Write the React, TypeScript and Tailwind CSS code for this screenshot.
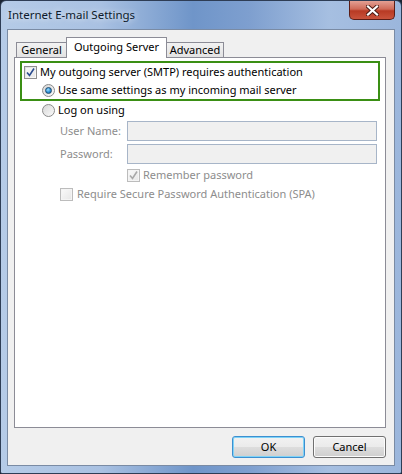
import React from "react";

function CheckBox({ checked, disabled }: { checked?: boolean; disabled?: boolean }) {
  return (
    <span
      className={
        disabled
          ? "w-[13px] h-[13px] shrink-0 border border-[#bcbcbc] bg-[#f4f4f4] flex items-center justify-center"
          : "w-[13px] h-[13px] shrink-0 border border-[#8f8f8f] bg-gradient-to-br from-[#dcdcdc] to-[#fbfbfb] flex items-center justify-center"
      }
    >
      <span className="w-[9px] h-[9px] bg-gradient-to-br from-[#f8f8f8] to-[#e8e8e8] flex items-center justify-center">
        {checked && (
          <svg width="9" height="9" viewBox="0 0 9 9">
            <path
              d="M1 4.5 L3.5 7.5 L8 0.5"
              fill="none"
              stroke={disabled ? "#a8a8a8" : "#2b4c8f"}
              strokeWidth="1.6"
            />
          </svg>
        )}
      </span>
    </span>
  );
}

function Radio({ checked }: { checked?: boolean }) {
  return (
    <span className="w-[13px] h-[13px] shrink-0 rounded-full border border-[#8a8a8a] bg-gradient-to-br from-[#d6d6d6] to-[#fbfbfb] flex items-center justify-center">
      {checked && (
        <span className="w-[7px] h-[7px] rounded-full border border-[#1c4a6e] bg-[radial-gradient(circle_at_40%_35%,#9fe1ff,#2a8ed6_55%,#1b5f93)]" />
      )}
    </span>
  );
}

export default function App() {
  const font = "font-['Noto_Sans','Liberation_Sans',sans-serif] text-[11px] leading-[16px]";

  return (
    <div className={`w-[402px] h-[474px] ${font} text-black bg-[#1a2433]`}>
      <div className="w-full h-full rounded-t-[6px] rounded-b-[2px] border border-[#2e3d55] bg-[linear-gradient(90deg,#b5cbe7_0%,#a9c1e2_25%,#6f95c9_48%,#7e9fcf_62%,#a6bfe1_82%,#9bb6dc_100%)] flex flex-col">
        <div className="h-[28px] flex justify-between shrink-0">
          <div className="pl-[7px] pt-[6px] text-[11.5px] text-[#0d1a2b] [text-shadow:0_0_6px_rgba(255,255,255,0.9)]">
            Internet E-mail Settings
          </div>
          <div className="mr-[6px] w-[46px] h-[19px] rounded-b-[5px] border border-t-0 border-[#5b1d16] bg-[linear-gradient(180deg,#e3a094_0%,#cf6a58_45%,#b83a24_55%,#c9533c_100%)] flex items-center justify-center">
            <svg width="13" height="11" viewBox="0 0 13 11">
              <path
                d="M2 1.5 L11 9.5 M11 1.5 L2 9.5"
                stroke="#4a1a14"
                strokeWidth="4"
                strokeLinecap="square"
              />
              <path
                d="M2 1.5 L11 9.5 M11 1.5 L2 9.5"
                stroke="#ffffff"
                strokeWidth="2.2"
                strokeLinecap="square"
              />
            </svg>
          </div>
        </div>

        <div className="flex-1 mx-[6px] mb-[7px] border border-[#7a8ba4] bg-[#f0f0f0] pl-[6px] pt-[7px] flex flex-col">
          {/* tabs */}
          <div className="flex items-end h-[20px] pl-[2px] relative z-10">
            <div className="w-[51px] h-[15px] border border-b-0 border-[#8c8c96] bg-gradient-to-b from-[#f2f2f2] to-[#e3e3e3] flex items-center justify-center">
              General
            </div>
            <div className="w-[101px] h-[21px] -mb-[1px] -ml-[1px] border border-b-0 border-[#8c8c96] bg-white flex justify-center pt-[1px]">
              Outgoing Server
            </div>
            <div className="w-[57px] h-[15px] border border-b-0 border-l-0 border-[#8c8c96] bg-gradient-to-b from-[#f2f2f2] to-[#e3e3e3] flex items-center justify-center">
              Advanced
            </div>
          </div>

          {/* tab panel */}
          <div className="w-[372px] h-[371px] border border-[#8c8c96] bg-white pt-[3px]">
            <div className="ml-[5px] w-[360px] border-2 border-[#3a8f14] pl-[2px]">
              <div className="h-[18px] flex items-center gap-[3px]">
                <CheckBox checked />
                <span>My outgoing server (SMTP) requires authentication</span>
              </div>
              <div className="h-[18px] flex items-center gap-[3px] pl-[18px]">
                <Radio checked />
                <span>Use same settings as my incoming mail server</span>
              </div>
            </div>

            <div className="h-[18px] flex items-center gap-[3px] pl-[27px]">
              <Radio />
              <span>Log on using</span>
            </div>

            <div className="mt-[2px] h-[20px] flex items-center pl-[45px] text-[#8d8d8d]">
              <span className="w-[67px]">User Name:</span>
              <div className="w-[250px] h-[20px] border border-[#a7b5c8] bg-[#f0f0f0]" />
            </div>
            <div className="mt-[3px] h-[20px] flex items-center pl-[45px] text-[#8d8d8d]">
              <span className="w-[67px]">Password:</span>
              <div className="w-[250px] h-[20px] border border-[#a7b5c8] bg-[#f0f0f0]" />
            </div>

            <div className="mt-[2px] h-[18px] flex items-center gap-[3px] pl-[112px] text-[#8d8d8d]">
              <CheckBox checked disabled />
              <span>Remember password</span>
            </div>
            <div className="mt-[1px] h-[18px] flex items-center gap-[4px] pl-[45px] text-[#8d8d8d]">
              <CheckBox disabled />
              <span>Require Secure Password Authentication (SPA)</span>
            </div>
          </div>

          {/* buttons */}
          <div className="w-[372px] mt-[8px] flex justify-end gap-[8px]">
            <button className="w-[73px] h-[22px] rounded-[3px] border border-[#3c8fd0] shadow-[inset_0_0_0_1px_#7fd3f7] bg-[linear-gradient(180deg,#f2f2f2_0%,#ebebeb_50%,#dddddd_51%,#cfcfcf_100%)] text-black">
              OK
            </button>
            <button className="w-[73px] h-[22px] rounded-[3px] border border-[#707070] shadow-[inset_0_0_0_1px_#fcfcfc] bg-[linear-gradient(180deg,#f2f2f2_0%,#ebebeb_50%,#dddddd_51%,#cfcfcf_100%)] text-black">
              Cancel
            </button>
          </div>
        </div>
      </div>
    </div>
  );
}
